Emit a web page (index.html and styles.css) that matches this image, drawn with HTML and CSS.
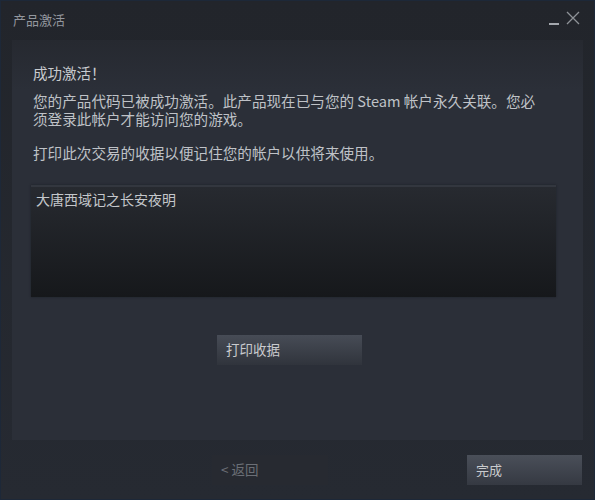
FILE: index.html
```html
<!DOCTYPE html>
<html lang="zh-CN">
<head>
  <meta charset="UTF-8">
  <meta name="viewport" content="width=device-width, initial-scale=1.0">
  <title>产品激活</title>
  <link rel="stylesheet" href="styles.css">
</head>
<body>
  <div class="window">
    <div class="titlebar">
      <span class="title">产品激活</span>
      <div class="controls">
        <span class="min"></span>
        <svg class="close" width="16" height="16" viewBox="0 0 16 16">
          <path d="M2 2 L14 14 M14 2 L2 14" stroke="#8e9298" stroke-width="1.3" fill="none"/>
        </svg>
      </div>
    </div>

    <div class="panel">
      <h1 class="heading">成功激活！</h1>
      <p class="text">您的产品代码已被成功激活。此产品现在已与您的 Steam 帐户永久关联。您必须登录此帐户才能访问您的游戏。</p>
      <p class="text">打印此次交易的收据以便记住您的帐户以供将来使用。</p>
      <div class="products">大唐西域记之长安夜明</div>
      <div class="print-row">
        <button class="btn print">打印收据</button>
      </div>
    </div>

    <div class="footer">
      <button class="btn back" disabled>&lt; 返回</button>
      <button class="btn done">完成</button>
    </div>
  </div>
</body>
</html>
```

FILE: styles.css
```css
html, body{
	margin: 0;
	padding: 0;
	background: #23262d;
}
body{
	font-family: "Noto Sans CJK SC", "Noto Sans", sans-serif;
	color: #c3c6ca;
}
.window{
	width: 595px;
	height: 500px;
	box-sizing: border-box;
	border: 1px solid #1d2838;
	background: linear-gradient(#22252b, #262a32);
	display: flex;
	flex-direction: column;
}
.titlebar{
	height: 39px;
	display: flex;
	align-items: flex-start;
	justify-content: space-between;
	padding: 0 13px 0 12px;
}
.title{
	font-size: 13px;
	line-height: 18px;
	margin-top: 10px;
	color: #93979e;
}
.controls{
	display: flex;
	align-items: flex-start;
	gap: 6px;
	margin-top: 9px;
}
.min{
	display: block;
	width: 10px;
	height: 2px;
	margin-top: 13px;
	background: #a3a7ad;
}
.close{
	display: block;
}
.panel{
	height: 400px;
	margin: 0 11px;
	padding: 24px 0 0 21px;
	box-sizing: border-box;
	background: linear-gradient(#262930 0, #2b2f38 50px, #2b2f38 100%);
}
.heading{
	margin: 0;
	font-size: 14.5px;
	font-weight: normal;
	line-height: 18px;
	color: #c8cbcf;
}
.text{
	width: 512px;
	margin: 10px 0 0;
	font-size: 14.6px;
	line-height: 18px;
	color: #bfc2c7;
}
.text + .text{
	margin-top: 16px;
}
.products{
	width: 525px;
	height: 112px;
	box-sizing: border-box;
	margin: 23px 0 0 -2px;
	padding: 3px 5px;
	font-size: 14px;
	line-height: 18px;
	color: #c4c7cb;
	border-top: 2px solid #33373f;
	background: linear-gradient(#272a30, #16181b);
	box-shadow: 0 0 2px rgba(20, 22, 26, 0.6);
}
.print-row{
	display: flex;
	padding-left: 184px;
	margin-top: 38px;
}
.btn{
	height: 30px;
	box-sizing: border-box;
	border: none;
	padding: 0 9px 2px;
	text-align: left;
	font-family: inherit;
	font-size: 13.5px;
	color: #c9cbce;
}
.print{
	width: 145px;
	background: linear-gradient(#474c56, #30343c);
}
.footer{
	flex: 1;
	display: flex;
	align-items: flex-start;
	padding: 15px 12px 0 211px;
}
.back{
	width: 116px;
	background: #272a31;
	color: #6b6f76;
}
.done{
	width: 115px;
	margin-left: auto;
	font-size: 13px;
	background: linear-gradient(#4a4f59, #353942);
}
```
